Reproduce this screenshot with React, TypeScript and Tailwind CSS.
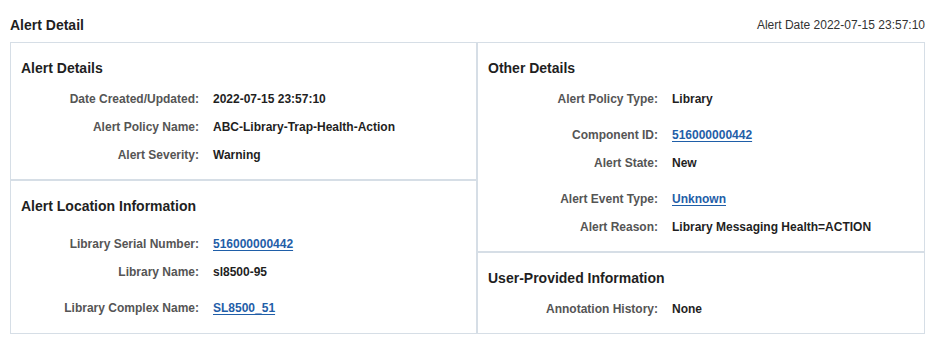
import type { ReactNode } from "react"

type Row = {
  label: string
  value: string
  link?: boolean
}

const alertDetails: Row[] = [
  { label: "Date Created/Updated:", value: "2022-07-15 23:57:10" },
  { label: "Alert Policy Name:", value: "ABC-Library-Trap-Health-Action" },
  { label: "Alert Severity:", value: "Warning" },
]

const locationInfo: Row[] = [
  { label: "Library Serial Number:", value: "516000000442", link: true },
  { label: "Library Name:", value: "sl8500-95" },
  { label: "Library Complex Name:", value: "SL8500_51", link: true },
]

const otherDetails: Row[] = [
  { label: "Alert Policy Type:", value: "Library" },
  { label: "Component ID:", value: "516000000442", link: true },
  { label: "Alert State:", value: "New" },
  { label: "Alert Event Type:", value: "Unknown", link: true },
  { label: "Alert Reason:", value: "Library Messaging Health=ACTION" },
]

const userInfo: Row[] = [{ label: "Annotation History:", value: "None" }]

function Section({
  title,
  rows,
  labelWidth,
  className = "",
}: {
  title: string
  rows: Row[]
  labelWidth: "left" | "right"
  className?: string
}) {
  return (
    <div className={`px-[10px] pt-[15px] pb-[10px] ${className}`}>
      <h3 className="h-5 leading-5 text-[14px] font-bold text-[#1f1f1f]">{title}</h3>
      <div className="mt-[7px] flex flex-col">
        {rows.map((row, i) => (
          <div
            key={row.label}
            className={`flex h-7 items-center text-[12px] font-bold ${row.link ? (i === 0 ? "mt-[7px]" : "mt-2") : ""}`}
          >
            <span
              className={`shrink-0 text-right text-[#555] ${labelWidth === "left" ? "w-[178px]" : "w-[170px]"}`}
            >
              {row.label}
            </span>
            <Value row={row} />
          </div>
        ))}
      </div>
    </div>
  )
}

function Value({ row }: { row: Row }): ReactNode {
  if (row.link) {
    return (
      <a href="#" className="ml-[14px] text-[#1f5ea8] underline underline-offset-2">
        {row.value}
      </a>
    )
  }
  return <span className="ml-[14px] text-[#1f1f1f]">{row.value}</span>
}

export default function App() {
  return (
    <div
      className="h-[339px] w-[928px] bg-white pl-[10px] pr-[3px]"
      style={{ fontFamily: '"Liberation Sans", Arial, sans-serif' }}
    >
      {/* Page Header */}
      <div className="flex h-[42px] items-start justify-between pt-[15px]">
        <h2 className="h-5 leading-5 text-[14px] font-bold text-[#1f1f1f]">Alert Detail</h2>
        <span className="h-5 leading-5 text-[12px] text-[#333]">Alert Date 2022-07-15 23:57:10</span>
      </div>

      {/* Detail Panels */}
      <div className="grid grid-cols-[467px_1fr] border border-[#d6dee6]">
        <div className="flex flex-col border-r-2 border-[#d6dee6]">
          <Section title="Alert Details" rows={alertDetails} labelWidth="left" className="border-b-2 border-[#d6dee6]" />
          <Section title="Alert Location Information" rows={locationInfo} labelWidth="left" className="flex-1" />
        </div>
        <div className="flex flex-col">
          <Section title="Other Details" rows={otherDetails} labelWidth="right" className="border-b-2 border-[#d6dee6]" />
          <Section title="User-Provided Information" rows={userInfo} labelWidth="right" className="flex-1" />
        </div>
      </div>
    </div>
  )
}
